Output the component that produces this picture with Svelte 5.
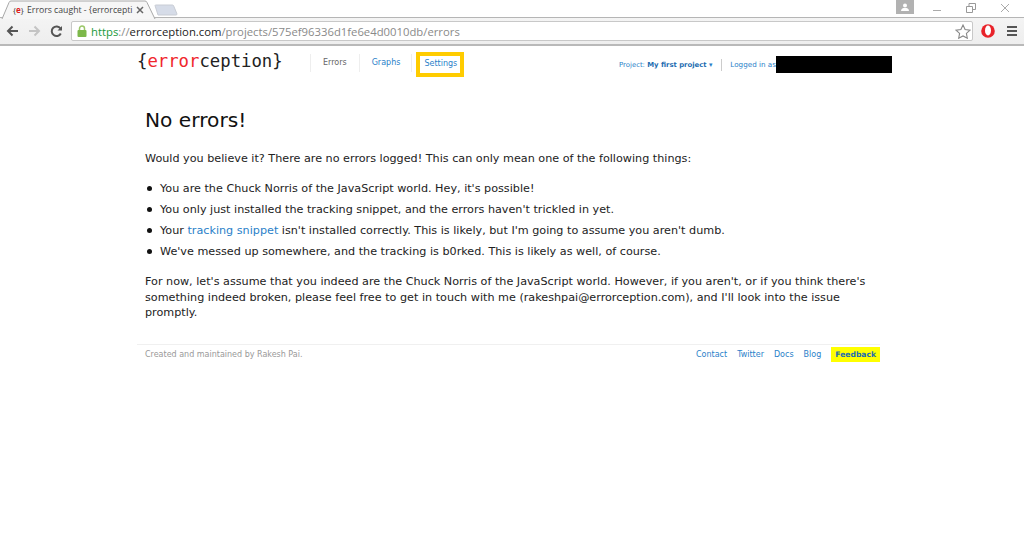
<script lang="ts">
	const items = [
		"You are the Chuck Norris of the JavaScript world. Hey, it's possible!",
		"You only just installed the tracking snippet, and the errors haven't trickled in yet."
	];
</script>

<div class="browser">
	<div class="tabstrip">
		<div class="tab">
			<svg class="tab-shape" width="157" height="19" viewBox="0 0 157 19"><path d="M2 19L9 2.500Q9.500 1 11 1H145Q146.500 1 147 2.500L155 19" fill="#f6f6f6" stroke="#a8a8a8" /></svg>
			<span class="favicon">{'{'}<b>e</b>{'}'}</span>
			<span class="tab-title">Errors caught - {'{'}errorcepti</span>
			<svg class="tab-close" width="8" height="8" viewBox="0 0 8 8"><path d="M1 1l6 6M7 1L1 7" stroke="#666" stroke-width="1.500" /></svg>
		</div>
		<svg class="new-tab" width="24" height="12" viewBox="0 0 24 12"><path d="M4 11L1 1.500Q1 1 2 1H18Q19 1 19.500 1.500L23 10Q23 11 22 11z" fill="#d6dce8" stroke="#c8ccd4" /></svg>
		<div class="window-controls">
			<div class="profile">
				<svg width="10" height="9" viewBox="0 0 10 9"><circle cx="5" cy="2.500" r="2" fill="#fff" /><path d="M1 8c0-2.500 2-3 4-3s4 .5 4 3z" fill="#fff" /></svg>
			</div>
			<svg class="win" width="10" height="10" viewBox="0 0 10 10"><path d="M1 7.500h8" stroke="#aaa" /></svg>
			<svg class="win" width="10" height="10" viewBox="0 0 10 10"><path d="M.5 3.500h6v6h-6zM3 3.500v-3h6.500v6h-3" fill="none" stroke="#999" /></svg>
			<svg class="win" width="10" height="10" viewBox="0 0 10 10"><path d="M1 1l8 8M9 1l-8 8" stroke="#aaa" /></svg>
		</div>
	</div>
	<div class="toolbar">
		<svg class="nav" width="13" height="12" viewBox="0 0 13 12"><path d="M12 6H3M6.500 1.500L2 6l4.500 4.500" fill="none" stroke="#555" stroke-width="2" /></svg>
		<svg class="nav" width="13" height="12" viewBox="0 0 13 12"><path d="M1 6h9M6.500 1.500L11 6l-4.500 4.500" fill="none" stroke="#c4c4c4" stroke-width="2" /></svg>
		<svg class="nav" width="13" height="13" viewBox="0 0 13 13"><path d="M10.800 8.500A4.800 4.800 0 1 1 10.500 3.500" fill="none" stroke="#555" stroke-width="2" /><path d="M12 1v4.500H7.500z" fill="#555" /></svg>
		<div class="omnibox">
			<svg class="lock" width="10" height="12" viewBox="0 0 10 12"><path d="M2.500 6V3.500a2.500 2.500 0 0 1 5 0V6" fill="none" stroke="#9bc76a" stroke-width="1.500" /><rect x="0.500" y="5" width="9" height="7" rx="1" fill="#7db84a" /></svg>
			<span class="url"><span class="https">https</span><span class="dim">://</span>errorception.com<span class="dim">/projects/575ef96336d1fe6e4d0010db/errors</span></span>
			<svg class="star" width="16" height="15" viewBox="0 0 16 15"><path d="M8 1l2.100 4.500 4.900.6-3.600 3.300.9 4.800L8 11.900l-4.300 2.300.9-4.800L1 6.100l4.900-.6z" fill="none" stroke="#888" stroke-width="1.100" /></svg>
		</div>
		<svg class="opera" width="14" height="14" viewBox="0 0 14 14"><circle cx="7" cy="7" r="6.800" fill="#e8232a" /><ellipse cx="7" cy="6.500" rx="3" ry="5" fill="#fff" /></svg>
		<div class="menu"><i></i><i></i><i></i></div>
	</div>
</div>

<div class="page">
	<header class="site-header">
		<div class="logo">{'{'}<span class="red">error</span>ception{'}'}</div>
		<nav class="main-nav">
			<a href="#errors" class="current">Errors</a>
			<a href="#graphs">Graphs</a>
			<span class="sep"></span>
			<a href="#settings" class="highlight">Settings</a>
		</nav>
		<div class="user-nav">
			<a href="#project">Project: <b>My first project</b> <span class="caret">▾</span></a>
			<span class="login">Logged in as</span>
			<span class="redacted"></span>
		</div>
	</header>

	<main>
		<h1>No errors!</h1>
		<p>Would you believe it? There are no errors logged! This can only mean one of the following things:</p>
		<ul>
			{#each items as item}
				<li>{item}</li>
			{/each}
			<li>Your <a href="#snippet">tracking snippet</a> isn't installed correctly. This is likely, but I'm going to assume you aren't dumb.</li>
			<li>We've messed up somewhere, and the tracking is b0rked. This is likely as well, of course.</li>
		</ul>
		<p class="last">For now, let's assume that you indeed are the Chuck Norris of the JavaScript world. However, if you aren't, or if you think there's something indeed broken, please feel free to get in touch with me (rakeshpai@errorception.com), and I'll look into the issue promptly.</p>
	</main>

	<footer>
		<span class="credit">Created and maintained by Rakesh Pai.</span>
		<div class="footer-links">
			<a href="#contact">Contact</a>
			<a href="#twitter">Twitter</a>
			<a href="#docs">Docs</a>
			<a href="#blog">Blog</a>
			<a href="#feedback" class="feedback">Feedback</a>
		</div>
	</footer>
</div>

<style>
	:global(body) {
		margin: 0;
		background: #fff;
		font-family: "DejaVu Sans", sans-serif;
		color: #222;
	}

	.browser {
		height: 46px;
		box-sizing: border-box;
		background: linear-gradient(#f8f8f8, #eee);
		border-bottom: 2px solid #b9b9b9;
		font-family: "Open Sans", sans-serif;
	}

	.tabstrip {
		display: flex;
		height: 18px;
		background: #fff;
		box-shadow: inset 0 -1px 0 #b5b5b5;
	}

	.tab {
		position: relative;
		display: flex;
		align-items: center;
		flex: none;
		width: 157px;
		height: 19px;
		padding-left: 13px;
		box-sizing: border-box;
		font-size: 8.700px;
		color: #444;
	}

	.tab-shape {
		position: absolute;
		top: 0;
		left: 0;
	}

	.favicon {
		position: relative;
		width: 14px;
		font-size: 8px;
		color: #333;
	}

	.favicon b {
		color: #e01b1b;
	}

	.tab-title {
		position: relative;
		width: 109px;
		white-space: nowrap;
	}

	.tab-close {
		position: relative;
	}

	.new-tab {
		flex: none;
		margin: 4px 0 0 -3px;
	}

	.window-controls {
		display: flex;
		margin-left: auto;
		align-items: flex-start;
		padding-right: 14px;
	}

	.profile {
		display: flex;
		align-items: center;
		justify-content: center;
		width: 18px;
		height: 14px;
		background: #b2b2b2;
	}

	.win {
		margin: 3px 0 0 24px;
	}

	.win:first-of-type {
		margin-left: 18px;
	}

	.toolbar {
		display: flex;
		align-items: center;
		height: 26px;
		padding-left: 6px;
	}

	.nav {
		margin-right: 9px;
		flex: none;
	}

	.omnibox {
		display: flex;
		align-items: center;
		width: 902px;
		height: 20px;
		box-sizing: border-box;
		margin-left: -1px;
		padding: 0 1px 0 5px;
		background: #fff;
		border: 1px solid #c8c8c8;
		border-radius: 2px;
	}

	.lock {
		margin-right: 4px;
	}

	.url {
		flex: 1;
		font-size: 11.300px;
		color: #222;
		white-space: nowrap;
	}

	.https {
		color: #1a9a3a;
	}

	.dim {
		color: #8a8a8a;
	}

	.opera {
		margin-left: 8px;
	}

	.menu {
		display: flex;
		flex-direction: column;
		gap: 2px;
		margin-left: 12px;
	}

	.menu i {
		display: block;
		width: 10px;
		height: 2px;
		background: #555;
	}

	.page {
		width: 744px;
		margin-left: 137px;
	}

	.site-header {
		display: flex;
		align-items: flex-start;
		height: 60px;
	}

	.logo {
		width: 173px;
		margin-top: 3px;
		font-family: "DejaVu Sans Mono", monospace;
		font-size: 17.300px;
		line-height: 24px;
		color: #222;
		white-space: nowrap;
	}

	.red {
		color: #f0262c;
	}

	.main-nav {
		display: flex;
		align-items: flex-start;
		margin-top: 6px;
		font-size: 8px;
	}

	.main-nav a {
		margin-top: 2px;
		padding: 0 12px;
		border-left: 1px solid #eee;
		line-height: 18px;
		color: #2a7fc9;
		text-decoration: none;
	}

	.main-nav a:nth-child(2) {
		padding-right: 11px;
	}

	.main-nav a.current {
		color: #666;
	}

	.sep {
		width: 1px;
		height: 18px;
		margin: 2px 4px 0 0;
		background: #eee;
	}

	.main-nav a.highlight {
		margin-top: 0;
		padding: 1px 3px 2px 4px;
		border: 4px solid #fc0;
		line-height: 14px;
	}

	.user-nav {
		display: flex;
		align-items: center;
		margin-left: auto;
		margin-top: 10px;
		margin-right: -11px;
		font-size: 7.200px;
		color: #2a7fc9;
	}

	.user-nav a {
		padding-right: 9px;
		border-right: 1px solid #ccc;
		font-size: 6.900px;
		line-height: 12px;
		color: #2a7fc9;
		text-decoration: none;
	}

	.user-nav b {
		color: #1c6cb0;
	}

	.login {
		margin-left: 8px;
	}

	.redacted {
		width: 116px;
		height: 17px;
		background: #000;
	}

	main {
		padding: 0 8px;
		font-size: 11.200px;
		line-height: 15.500px;
		color: #222;
	}

	h1 {
		margin: 0 0 17px;
		font-size: 20.200px;
		font-weight: 400;
		line-height: 28px;
		color: #111;
	}

	p {
		margin: 0;
	}

	ul {
		margin: 14px 0 15px;
		padding-left: 15px;
		list-style: none;
	}

	li {
		position: relative;
		margin-bottom: 5.500px;
	}

	li:last-child {
		margin-bottom: 0;
	}

	li::before {
		content: "";
		position: absolute;
		left: -13px;
		top: 5px;
		width: 5px;
		height: 5px;
		border-radius: 50%;
		background: #111;
	}

	main a {
		color: #2a7fc9;
		text-decoration: none;
	}

	footer {
		display: flex;
		justify-content: space-between;
		align-items: center;
		margin: 23px 1px 0 0;
		padding: 2px 0 0 8px;
		border-top: 1px solid #f0f0f0;
		font-size: 8px;
	}

	.credit {
		color: #999;
	}

	.footer-links {
		display: flex;
		align-items: center;
		gap: 10px;
	}

	.footer-links a {
		color: #2a7fc9;
		text-decoration: none;
	}

	.footer-links a.feedback {
		padding: 3px 4px;
		background: #ff0;
		font-size: 7.600px;
		font-weight: 700;
		color: #1c6cb0;
	}
</style>
